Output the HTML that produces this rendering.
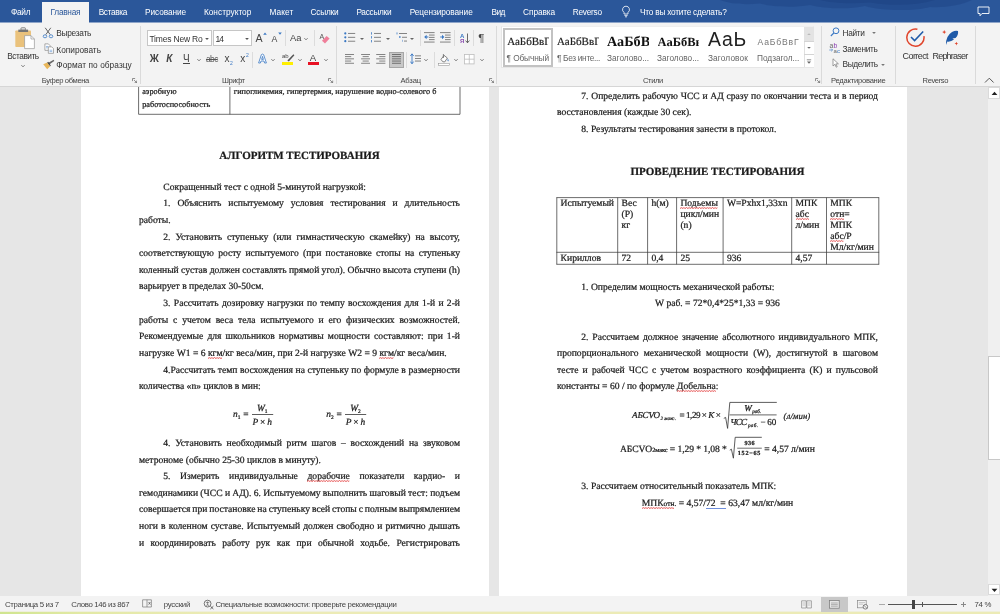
<!DOCTYPE html>
<html lang="ru"><head><meta charset="utf-8"><title>Word</title>
<style>
html,body{margin:0;padding:0}
body{width:1000px;height:614px;position:relative;overflow:hidden;background:#e6e6e6;font-family:"Liberation Sans",sans-serif;}
.dl{-webkit-text-stroke:0.22px #1a1a1a;text-rendering:geometricPrecision;position:absolute;white-space:nowrap;font-family:"Liberation Serif",serif;color:#1a1a1a;line-height:14px;height:14px}
.ui{position:absolute;white-space:nowrap;font-family:"Liberation Sans",sans-serif;font-size:8.3px;color:#333;line-height:10px;height:10px}
u.sq{text-decoration:none;position:relative;display:inline-block}
.sqs{position:absolute;left:0;top:10.1px;width:100%;height:2px}
u.bl{text-decoration:none;background:linear-gradient(#6f8fdc,#6f8fdc) 0 9.6px/100% 1.4px no-repeat}
.page{position:absolute;background:#fff;top:87px;height:509px}
</style></head><body>
<svg width="0" height="0" style="position:absolute"><defs><pattern id="wv" width="2.6" height="2" patternUnits="userSpaceOnUse"><path d="M0 1.6 L1.3 0.5 L2.6 1.6" fill="none" stroke="#e02a2a" stroke-width="0.75"/></pattern></defs></svg>

<div style="position:absolute;left:0;top:0;width:1000px;height:614px;will-change:transform">
<div class="page" style="left:81px;width:408px"></div>
<div class="page" style="left:499px;width:408px"></div>
<svg style="position:absolute;left:0;top:87px" width="1000" height="40"><g fill="none" stroke="#3c3c3c" stroke-width="0.75"><path d="M138.6 0 V27.3 H460 V0 M229.9 0 V27.3"/></g></svg>
<div class="dl" style="top:85px;left:142.20px;font-size:8.25px;">аэробную</div>
<div class="dl" style="top:98px;left:142.20px;font-size:8.25px;">работоспособность</div>
<div class="dl" style="top:85px;left:233.80px;font-size:8.25px;">гипогликемия, гипертермия, нарушение водно-солевого б</div>
<div class="dl" style="top:149px;left:139.00px;font-size:11px;width:321.00px;text-align:center;font-weight:bold;">АЛГОРИТМ ТЕСТИРОВАНИЯ</div>
<div class="dl" style="top:181px;left:163.30px;font-size:9.6px;">Сокращенный тест с одной 5-минутой нагрузкой:</div>
<div class="dl" style="top:197px;left:163.30px;font-size:9.6px;width:296.70px;word-spacing:4.512px;">1. Объяснить испытуемому условия тестирования и длительность</div>
<div class="dl" style="top:214px;left:139.00px;font-size:9.6px;">работы.</div>
<div class="dl" style="top:231px;left:163.30px;font-size:9.6px;width:296.70px;word-spacing:2.526px;">2. Установить ступеньку (или гимнастическую скамейку) на высоту,</div>
<div class="dl" style="top:247px;left:139.00px;font-size:9.6px;width:321.00px;word-spacing:1.879px;">соответствующую росту испытуемого (при постановке стопы на ступеньку</div>
<div class="dl" style="top:264px;left:139.00px;font-size:9.6px;width:321.00px;word-spacing:-0.054px;">коленный сустав должен составлять прямой угол). Обычно высота ступени (h)</div>
<div class="dl" style="top:280px;left:139.00px;font-size:9.6px;">варьирует в пределах 30-50см.</div>
<div class="dl" style="top:297px;left:163.30px;font-size:9.6px;width:296.70px;word-spacing:0.940px;">3. Рассчитать дозировку нагрузки по темпу восхождения для 1-й и 2-й</div>
<div class="dl" style="top:314px;left:139.00px;font-size:9.6px;width:321.00px;word-spacing:2.436px;">работы с учетом веса тела испытуемого и его физических возможностей.</div>
<div class="dl" style="top:330px;left:139.00px;font-size:9.6px;width:321.00px;word-spacing:1.705px;">Рекомендуемые для школьников нормативы мощности составляют: при 1-й</div>
<div class="dl" style="top:347px;left:139.00px;font-size:9.6px;">нагрузке W1 = 6 <u class="sq">кгм<svg class="sqs" preserveAspectRatio="none"><rect width="100%" height="2" fill="url(#wv)"/></svg></u>/кг веса/мин, при 2-й нагрузке W2 = 9 <u class="sq">кгм<svg class="sqs" preserveAspectRatio="none"><rect width="100%" height="2" fill="url(#wv)"/></svg></u>/кг веса/мин.</div>
<div class="dl" style="top:364px;left:163.30px;font-size:9.6px;width:296.70px;word-spacing:0.109px;">4.Рассчитать темп восхождения на ступеньку по формуле в размерности</div>
<div class="dl" style="top:380px;left:139.00px;font-size:9.6px;">количества «n» циклов в мин:</div>
<div class="dl" style="top:437px;left:163.30px;font-size:9.6px;width:296.70px;word-spacing:2.326px;">4. Установить необходимый ритм шагов – восхождений на звуковом</div>
<div class="dl" style="top:454px;left:139.00px;font-size:9.6px;">метрономе (обычно 25-30 циклов в минуту).</div>
<div class="dl" style="top:470px;left:163.30px;font-size:9.6px;width:296.70px;word-spacing:7.169px;">5. Измерить индивидуальные <u class="sq">дорабочие<svg class="sqs" preserveAspectRatio="none"><rect width="100%" height="2" fill="url(#wv)"/></svg></u> показатели кардио- и</div>
<div class="dl" style="top:487px;left:139.00px;font-size:9.6px;width:321.00px;word-spacing:-0.097px;">гемодинамики (ЧСС и АД). 6. Испытуемому выполнить шаговый тест: подъем</div>
<div class="dl" style="top:503px;left:139.00px;font-size:9.6px;width:321.00px;word-spacing:-0.498px;">совершается при постановке на ступеньку всей стопы с полным выпрямлением</div>
<div class="dl" style="top:520px;left:139.00px;font-size:9.6px;width:321.00px;word-spacing:0.696px;">ноги в коленном суставе. Испытуемый должен свободно и ритмично дышать</div>
<div class="dl" style="top:537px;left:139.00px;font-size:9.6px;width:321.00px;word-spacing:4.004px;">и координировать работу рук как при обычной ходьбе. Регистрировать</div>
<div class="dl" style="top:408px;left:233.00px;font-size:9.4px;font-style:italic;">n<span style="font-size:5.4px;font-style:normal;position:relative;top:1.6px">1</span></div>
<div class="dl" style="top:408px;left:243.30px;font-size:9.4px;">=</div>
<svg style="position:absolute;left:251.6px;top:413px" width="22" height="3"><path d="M0 1.5 H21.2" stroke="#333" stroke-width="0.8"/></svg>
<div class="dl" style="top:402px;left:251.60px;font-size:9.4px;width:21.20px;text-align:center;font-style:italic;">W<span style="font-size:5.4px;font-style:normal;position:relative;top:1.6px">1</span></div>
<div class="dl" style="top:416px;left:251.60px;font-size:9.4px;width:21.20px;text-align:center;font-style:italic;">P<span style="font-style:normal">&thinsp;×&thinsp;</span>h</div>
<div class="dl" style="top:408px;left:326.20px;font-size:9.4px;font-style:italic;">n<span style="font-size:5.4px;font-style:normal;position:relative;top:1.6px">2</span></div>
<div class="dl" style="top:408px;left:336.50px;font-size:9.4px;">=</div>
<svg style="position:absolute;left:344.8px;top:413px" width="22" height="3"><path d="M0 1.5 H21.2" stroke="#333" stroke-width="0.8"/></svg>
<div class="dl" style="top:402px;left:344.80px;font-size:9.4px;width:21.20px;text-align:center;font-style:italic;">W<span style="font-size:5.4px;font-style:normal;position:relative;top:1.6px">2</span></div>
<div class="dl" style="top:416px;left:344.80px;font-size:9.4px;width:21.20px;text-align:center;font-style:italic;">P<span style="font-style:normal">&thinsp;×&thinsp;</span>h</div>
<div class="dl" style="top:90px;left:581.30px;font-size:9.6px;width:296.70px;word-spacing:0.355px;">7. Определить рабочую ЧСС и АД сразу по окончании теста и в период</div>
<div class="dl" style="top:106px;left:557.00px;font-size:9.6px;">восстановления (каждые 30 сек).</div>
<div class="dl" style="top:123px;left:581.30px;font-size:9.6px;">8. Результаты тестирования занести в протокол.</div>
<div class="dl" style="top:165px;left:557.00px;font-size:11px;width:321.00px;text-align:center;font-weight:bold;">ПРОВЕДЕНИЕ ТЕСТИРОВАНИЯ</div>
<svg style="position:absolute;left:0;top:0" width="1000" height="300"><g fill="none" stroke="#3c3c3c" stroke-width="0.75"><path d="M556.40 197.60 H879.20"/><path d="M556.40 252.30 H879.20"/><path d="M556.40 264.30 H879.20"/><path d="M556.80 197.60 V264.30"/><path d="M617.70 197.60 V264.30"/><path d="M647.60 197.60 V264.30"/><path d="M676.60 197.60 V264.30"/><path d="M723.10 197.60 V264.30"/><path d="M791.70 197.60 V264.30"/><path d="M826.50 197.60 V264.30"/><path d="M878.80 197.60 V264.30"/></g></svg>
<div class="dl" style="top:197px;left:560.60px;font-size:9.6px;">Испытуемый</div>
<div class="dl" style="top:197px;left:621.50px;font-size:9.6px;">Вес</div>
<div class="dl" style="top:208px;left:621.50px;font-size:9.6px;">(P)</div>
<div class="dl" style="top:219px;left:621.50px;font-size:9.6px;">кг</div>
<div class="dl" style="top:197px;left:651.40px;font-size:9.6px;">h(м)</div>
<div class="dl" style="top:197px;left:680.40px;font-size:9.6px;"><u class="sq">Подьемы<svg class="sqs" preserveAspectRatio="none"><rect width="100%" height="2" fill="url(#wv)"/></svg></u></div>
<div class="dl" style="top:208px;left:680.40px;font-size:9.6px;">цикл/мин</div>
<div class="dl" style="top:219px;left:680.40px;font-size:9.6px;">(n)</div>
<div class="dl" style="top:197px;left:726.90px;font-size:9.6px;">W=Pxhx1,33xn</div>
<div class="dl" style="top:197px;left:795.50px;font-size:9.6px;">МПК</div>
<div class="dl" style="top:208px;left:795.50px;font-size:9.6px;"><u class="sq">абс<svg class="sqs" preserveAspectRatio="none"><rect width="100%" height="2" fill="url(#wv)"/></svg></u></div>
<div class="dl" style="top:219px;left:795.50px;font-size:9.6px;">л/мин</div>
<div class="dl" style="top:197px;left:830.30px;font-size:9.6px;">МПК</div>
<div class="dl" style="top:208px;left:830.30px;font-size:9.6px;"><u class="sq">отн<svg class="sqs" preserveAspectRatio="none"><rect width="100%" height="2" fill="url(#wv)"/></svg></u>=</div>
<div class="dl" style="top:219px;left:830.30px;font-size:9.6px;">МПК</div>
<div class="dl" style="top:230px;left:830.30px;font-size:9.6px;"><u class="sq">абс<svg class="sqs" preserveAspectRatio="none"><rect width="100%" height="2" fill="url(#wv)"/></svg></u>/P</div>
<div class="dl" style="top:241px;left:830.30px;font-size:9.6px;">Мл/кг/мин</div>
<div class="dl" style="top:252px;left:560.60px;font-size:9.6px;">Кириллов</div>
<div class="dl" style="top:252px;left:621.50px;font-size:9.6px;">72</div>
<div class="dl" style="top:252px;left:651.40px;font-size:9.6px;">0,4</div>
<div class="dl" style="top:252px;left:680.40px;font-size:9.6px;">25</div>
<div class="dl" style="top:252px;left:726.90px;font-size:9.6px;">936</div>
<div class="dl" style="top:252px;left:795.50px;font-size:9.6px;">4,57</div>
<div class="dl" style="top:281px;left:581.30px;font-size:9.6px;">1. Определим мощность механической работы:</div>
<div class="dl" style="top:297px;left:557.00px;font-size:9.6px;width:321.00px;text-align:center;">W раб. = 72*0,4*25*1,33 = 936</div>
<div class="dl" style="top:331px;left:581.30px;font-size:9.6px;width:296.70px;word-spacing:1.408px;">2. Рассчитаем должное значение абсолютного индивидуального МПК,</div>
<div class="dl" style="top:347px;left:557.00px;font-size:9.6px;width:321.00px;word-spacing:2.815px;">пропорционального механической мощности (W), достигнутой в шаговом</div>
<div class="dl" style="top:364px;left:557.00px;font-size:9.6px;width:321.00px;word-spacing:1.794px;">тесте и рабочей ЧСС с учетом возрастного коэффициента (К) и пульсовой</div>
<div class="dl" style="top:380px;left:557.00px;font-size:9.6px;">константы = 60 / по формуле <u class="sq">Добельна<svg class="sqs" preserveAspectRatio="none"><rect width="100%" height="2" fill="url(#wv)"/></svg></u>:</div>
<div class="dl" style="top:408px;left:632.00px;font-size:9.1px;font-style:italic;letter-spacing:-0.169px;">АБСVO</div>
<div class="dl" style="top:413px;left:660.40px;font-size:5px;font-style:italic;letter-spacing:0.077px;">2 макс.</div>
<div class="dl" style="top:408px;left:679.60px;font-size:9.1px;letter-spacing:-0.481px;">= 1,29 × <i>K</i> ×</div>
<svg style="position:absolute;left:722px;top:398px" width="58" height="34" viewBox="0 0 58 34"><path d="M1.8 20.4 L3.6 19.4 L5.6 30.4 L7.8 4.4 L54.8 4.4" fill="none" stroke="#333" stroke-width="0.8"/><path d="M7.6 16.9 H54.6" stroke="#333" stroke-width="0.75"/></svg>
<div class="dl" style="top:401px;left:744.20px;font-size:9.1px;font-style:italic;letter-spacing:0.822px;">W</div>
<div class="dl" style="top:405px;left:752.20px;font-size:5.2px;font-style:italic;letter-spacing:-0.023px;">раб.</div>
<div class="dl" style="top:415px;left:730.20px;font-size:9.1px;font-style:italic;letter-spacing:-0.735px;">ЧСС</div>
<div class="dl" style="top:419px;left:748.00px;font-size:5.2px;font-style:italic;letter-spacing:0.277px;">раб.</div>
<div class="dl" style="top:415px;left:760.60px;font-size:9.1px;letter-spacing:-0.112px;">−&thinsp;60</div>
<div class="dl" style="top:409px;left:783.60px;font-size:8.8px;font-style:italic;letter-spacing:0.012px;">(л/мин)</div>
<div class="dl" style="top:443px;left:620.00px;font-size:9.6px;letter-spacing:-0.094px;">АБСVO<span style="font-size:6.4px">2макс</span> = 1,29 * 1,08 *</div>
<svg style="position:absolute;left:728px;top:433px" width="36" height="28" viewBox="0 0 36 28"><path d="M1.8 17.2 L3.4 16.2 L5.4 25.2 L7.2 4.3 L33.8 4.3" fill="none" stroke="#333" stroke-width="0.8"/><path d="M9.2 15.2 H33.8" stroke="#333" stroke-width="0.7"/></svg>
<div class="dl" style="top:437px;left:744.60px;font-size:6.2px;font-weight:bold;letter-spacing:0.306px;">936</div>
<div class="dl" style="top:447px;left:737.80px;font-size:6.2px;font-weight:bold;letter-spacing:0.733px;">152−65</div>
<div class="dl" style="top:443px;left:764.20px;font-size:9.6px;letter-spacing:-0.016px;">= 4,57 л/мин</div>
<div class="dl" style="top:480px;left:581.30px;font-size:9.6px;">3. Рассчитаем относительный показатель МПК:</div>
<div class="dl" style="top:497px;left:557.00px;font-size:9.6px;width:321.00px;text-align:center;"><u class="sq">МПК<span style="font-size:7.4px">отн</span><svg class="sqs" preserveAspectRatio="none"><rect width="100%" height="2" fill="url(#wv)"/></svg></u><span style="font-size:7.4px">.</span> = 4,57/<u class="bl">72&nbsp; =</u> 63,47 мл/кг/мин</div>
<div style="position:absolute;left:0px;top:0px;width:1000px;height:22px;background:#2b579a;"></div>
<div style="position:absolute;left:0px;top:22px;width:1000px;height:1px;background:#8ea5c9;"></div>
<svg style="position:absolute;left:700px;top:0px" width="290" height="14" viewBox="0 0 290 14"><path d="M20 0 C30 4 45 5 60 3.5 C70 7 95 8 110 5 C125 9 150 9.5 165 6 C180 11 215 11.5 230 7 C245 8 262 5 272 0 Z" fill="#1f4686" opacity="0.55"/><path d="M120 0 C130 3 150 4 170 2.5 C190 6 215 6 235 0 Z" fill="#1b3f7c" opacity="0.4"/></svg>
<div style="position:absolute;left:0px;top:23px;width:1000px;height:63px;background:#f3f3f3;"></div>
<div style="position:absolute;left:0px;top:86px;width:1000px;height:1px;background:#d6d6d6;"></div>
<div style="position:absolute;left:42px;top:2px;width:47px;height:21px;background:#f3f3f3;"></div>
<div class="ui" style="top:7px;left:11.00px;color:#fff;letter-spacing:-0.277px;">Файл</div>
<div class="ui" style="top:7px;left:50.60px;color:#2b579a;letter-spacing:-0.285px;">Главная</div>
<div class="ui" style="top:7px;left:98.70px;color:#fff;letter-spacing:-0.363px;">Вставка</div>
<div class="ui" style="top:7px;left:145.00px;color:#fff;letter-spacing:-0.089px;">Рисование</div>
<div class="ui" style="top:7px;left:203.90px;color:#fff;letter-spacing:0.017px;">Конструктор</div>
<div class="ui" style="top:7px;left:269.50px;color:#fff;letter-spacing:0.083px;">Макет</div>
<div class="ui" style="top:7px;left:310.60px;color:#fff;letter-spacing:-0.253px;">Ссылки</div>
<div class="ui" style="top:7px;left:356.40px;color:#fff;letter-spacing:-0.294px;">Рассылки</div>
<div class="ui" style="top:7px;left:409.70px;color:#fff;letter-spacing:-0.077px;">Рецензирование</div>
<div class="ui" style="top:7px;left:491.60px;color:#fff;letter-spacing:-0.639px;">Вид</div>
<div class="ui" style="top:7px;left:523.10px;color:#fff;letter-spacing:-0.095px;">Справка</div>
<div class="ui" style="top:7px;left:572.70px;color:#fff;letter-spacing:-0.258px;">Reverso</div>
<div class="ui" style="top:7px;left:640.00px;color:#fff;letter-spacing:-0.233px;">Что вы хотите сделать?</div>
<svg style="position:absolute;left:621px;top:5px" width="10" height="13" viewBox="0 0 10 13"><path d="M5 1.2 a3.4 3.4 0 0 1 2 6.2 V9 H3 V7.4 A3.4 3.4 0 0 1 5 1.2 Z M3.4 10.4 H6.6 M4 11.8 H6" fill="none" stroke="#fff" stroke-width="0.8"/></svg>
<svg style="position:absolute;left:977px;top:6px" width="13" height="11" viewBox="0 0 13 11"><path d="M1 1 H12 V7.5 H5 L3 9.8 V7.5 H1 Z" fill="none" stroke="#fff" stroke-width="0.9"/></svg>
<div style="position:absolute;left:140px;top:26px;width:1px;height:58px;background:#dadada;"></div>
<div style="position:absolute;left:336px;top:26px;width:1px;height:58px;background:#dadada;"></div>
<div style="position:absolute;left:496px;top:26px;width:1px;height:58px;background:#dadada;"></div>
<div style="position:absolute;left:821px;top:26px;width:1px;height:58px;background:#dadada;"></div>
<div style="position:absolute;left:895px;top:26px;width:1px;height:58px;background:#dadada;"></div>
<div style="position:absolute;left:975px;top:26px;width:1px;height:58px;background:#dadada;"></div>
<div class="ui" style="top:76px;left:41.70px;font-size:7.6px;color:#444;letter-spacing:-0.359px;">Буфер обмена</div>
<div class="ui" style="top:76px;left:222.00px;font-size:7.6px;color:#444;letter-spacing:-0.477px;">Шрифт</div>
<div class="ui" style="top:76px;left:400.40px;font-size:7.6px;color:#444;letter-spacing:-0.142px;">Абзац</div>
<div class="ui" style="top:76px;left:643.00px;font-size:7.6px;color:#444;letter-spacing:-0.378px;">Стили</div>
<div class="ui" style="top:76px;left:831.00px;font-size:7.6px;color:#444;letter-spacing:-0.233px;">Редактирование</div>
<div class="ui" style="top:76px;left:922.60px;font-size:7.6px;color:#444;letter-spacing:-0.412px;">Reverso</div>
<svg style="position:absolute;left:132.2px;top:78px" width="5.2" height="5.2" viewBox="0 0 5 5"><path d="M0.5 3 V0.5 H3 M2 2 L4.5 4.5 M4.5 2.5 V4.5 H2.5" fill="none" stroke="#666" stroke-width="0.7"/></svg>
<svg style="position:absolute;left:328.4px;top:78px" width="5.2" height="5.2" viewBox="0 0 5 5"><path d="M0.5 3 V0.5 H3 M2 2 L4.5 4.5 M4.5 2.5 V4.5 H2.5" fill="none" stroke="#666" stroke-width="0.7"/></svg>
<svg style="position:absolute;left:488.6px;top:78px" width="5.2" height="5.2" viewBox="0 0 5 5"><path d="M0.5 3 V0.5 H3 M2 2 L4.5 4.5 M4.5 2.5 V4.5 H2.5" fill="none" stroke="#666" stroke-width="0.7"/></svg>
<svg style="position:absolute;left:815.4px;top:78px" width="5.2" height="5.2" viewBox="0 0 5 5"><path d="M0.5 3 V0.5 H3 M2 2 L4.5 4.5 M4.5 2.5 V4.5 H2.5" fill="none" stroke="#666" stroke-width="0.7"/></svg>
<svg style="position:absolute;left:984px;top:77px" width="11" height="7" viewBox="0 0 11 7"><path d="M1 5.5 L5.3 1.2 L9.6 5.5" fill="none" stroke="#444" stroke-width="0.9"/></svg>
<svg style="position:absolute;left:14px;top:27px" width="22" height="23" viewBox="0 0 22 23"><rect x="1.3" y="3.4" width="15.7" height="16.6" rx="0.8" fill="#eac27c"/>
<rect x="4.3" y="2.6" width="9.8" height="2.4" fill="#777"/><rect x="7" y="0.8" width="4.4" height="2.4" rx="0.6" fill="none" stroke="#777" stroke-width="0.9"/>
<path d="M10.6 8.6 H17 L20.4 12 V21.6 H10.6 Z" fill="#fff" stroke="#9a9a9a" stroke-width="0.7"/><path d="M17 8.6 V12 H20.4" fill="none" stroke="#9a9a9a" stroke-width="0.7"/></svg>
<div class="ui" style="top:51px;left:7.30px;letter-spacing:-0.471px;">Вставить</div>
<svg style="position:absolute;left:20px;top:64.2px" width="6" height="4" viewBox="0 0 6 4"><path d="M1.4 1.2 L3 2.8 L4.6 1.2" fill="none" stroke="#555" stroke-width="0.8"/></svg>
<svg style="position:absolute;left:42px;top:27px" width="12" height="12" viewBox="0 0 12 12"><path d="M3.2 0.8 L8.2 7.6 M8.8 0.8 L3.8 7.6" stroke="#555" stroke-width="0.9" fill="none"/>
<ellipse cx="3" cy="9.3" rx="1.8" ry="1.5" fill="none" stroke="#3a78c4" stroke-width="0.8"/><ellipse cx="9" cy="9.3" rx="1.8" ry="1.5" fill="none" stroke="#3a78c4" stroke-width="0.8"/></svg>
<div class="ui" style="top:28px;left:56.30px;letter-spacing:-0.276px;">Вырезать</div>
<svg style="position:absolute;left:43.8px;top:43.2px" width="10.4" height="11.2" viewBox="0 0 12 13"><path d="M1 1 H5 L7 3 V8.5 H1 Z" fill="#fff" stroke="#777" stroke-width="0.7"/><path d="M5 4.5 H9 L11 6.5 V12 H5 Z" fill="#fff" stroke="#777" stroke-width="0.7"/>
<path d="M2.3 4 H5 M2.3 5.6 H4.4 M6.4 8.4 H9.6 M6.4 10 H9.6" stroke="#5a8fd0" stroke-width="0.7"/></svg>
<div class="ui" style="top:45px;left:56.30px;letter-spacing:0.001px;">Копировать</div>
<svg style="position:absolute;left:42px;top:59px" width="13" height="11" viewBox="0 0 13 11"><path d="M1.2 5.2 L5.2 3.4 L8.2 7.2 L5.2 10.2 Z" fill="#e8b65a"/><path d="M6 4 L11.6 0.8 L12.3 2 L7.2 5.6 Z" fill="#666"/><path d="M5.2 3.4 L6.2 2.8 L8.8 6.4 L8.2 7.2 Z" fill="#444"/></svg>
<div class="ui" style="top:60px;left:56.30px;letter-spacing:0.064px;">Формат по образцу</div>
<div style="position:absolute;left:147px;top:30px;width:65px;height:16px;background:#fff;border:1px solid #c6c6c6;box-sizing:border-box"></div>
<div style="position:absolute;left:213px;top:30px;width:39px;height:16px;background:#fff;border:1px solid #c6c6c6;box-sizing:border-box"></div>
<div style="position:absolute;left:149.4px;top:32px;width:54px;height:12px;overflow:hidden"></div>
<div class="ui" style="top:34px;left:149.40px;font-size:8.5px;color:#333;letter-spacing:-0.188px;width:53.4px;overflow:hidden;">Times New Ror</div>
<div class="ui" style="top:34px;left:215.40px;font-size:8.5px;color:#333;letter-spacing:-0.934px;">14</div>
<svg style="position:absolute;left:204.3px;top:36.8px" width="6" height="4" viewBox="0 0 6 4"><path d="M1.1 1 L4.9 1 L3 2.9 Z" fill="#555"/></svg>
<svg style="position:absolute;left:244.3px;top:36.8px" width="6" height="4" viewBox="0 0 6 4"><path d="M1.1 1 L4.9 1 L3 2.9 Z" fill="#555"/></svg>
<div class="ui" style="top:33px;left:255.60px;font-size:10.6px;color:#444;">A</div>
<svg style="position:absolute;left:262.8px;top:32.2px" width="4" height="3" viewBox="0 0 4 3"><path d="M0.2 2.8 L2 0.4 L3.8 2.8 Z" fill="#3a78c4"/></svg>
<div class="ui" style="top:34px;left:271.60px;font-size:8.8px;color:#444;">A</div>
<svg style="position:absolute;left:277.8px;top:32.2px" width="4" height="3" viewBox="0 0 4 3"><path d="M0.2 0.4 L3.8 0.4 L2 2.8 Z" fill="#3a78c4"/></svg>
<div style="position:absolute;left:285px;top:30px;width:1px;height:16px;background:#dcdcdc;"></div>
<div class="ui" style="top:33px;left:290.00px;font-size:9.4px;color:#444;letter-spacing:-0.034px;">Aa</div>
<svg style="position:absolute;left:302.8px;top:36.6px" width="6" height="4" viewBox="0 0 6 4"><path d="M1.4 1.2 L3 2.8 L4.6 1.2" fill="none" stroke="#555" stroke-width="0.8"/></svg>
<div style="position:absolute;left:314px;top:30px;width:1px;height:16px;background:#dcdcdc;"></div>
<div class="ui" style="top:32px;left:319.60px;font-size:7px;color:#555;">A</div>
<svg style="position:absolute;left:321px;top:35px" width="10" height="9" viewBox="0 0 10 9"><path d="M1 5.8 L5.6 1 L8.6 3.6 L4 8.4 Z" fill="#ef7f9a"/></svg>
<div class="ui" style="top:54px;left:149.80px;font-size:10px;color:#444;font-weight:bold;letter-spacing:0.553px;">Ж</div>
<div class="ui" style="top:54px;left:166.20px;font-size:10px;color:#444;font-weight:bold;font-style:italic;">К</div>
<div class="ui" style="top:54px;left:183.00px;font-size:10px;color:#444;">Ч</div>
<div style="position:absolute;left:183px;top:63px;width:7px;height:1px;background:#444;"></div>
<svg style="position:absolute;left:195.5px;top:58px" width="6" height="4" viewBox="0 0 6 4"><path d="M1.4 1.2 L3 2.8 L4.6 1.2" fill="none" stroke="#555" stroke-width="0.8"/></svg>
<div class="ui" style="top:54px;left:206.00px;font-size:8.4px;color:#555;letter-spacing:-0.572px;text-decoration:line-through;">abc</div>
<div class="ui" style="top:54px;left:224.40px;font-size:10px;color:#444;">x</div>
<div class="ui" style="top:58px;left:230.00px;font-size:5px;color:#3a78c4;">2</div>
<div class="ui" style="top:54px;left:240.20px;font-size:10px;color:#444;">x</div>
<div class="ui" style="top:50px;left:246.00px;font-size:5px;color:#3a78c4;">2</div>
<div style="position:absolute;left:252px;top:52px;width:1px;height:16px;background:#dcdcdc;"></div>
<svg style="position:absolute;left:257px;top:53px" width="11" height="11" viewBox="0 0 11 11"><path d="M1.6 10 L4.4 1.6 Q5.5 0.6 6.6 1.6 L9.4 10 H7.6 L7 8 H4 L3.4 10 Z M4.6 6.4 H6.4 L5.5 3.4 Z" fill="#fff" stroke="#3a78c4" stroke-width="0.8"/></svg>
<svg style="position:absolute;left:270px;top:58px" width="6" height="4" viewBox="0 0 6 4"><path d="M1.4 1.2 L3 2.8 L4.6 1.2" fill="none" stroke="#555" stroke-width="0.8"/></svg>
<div class="ui" style="top:51px;left:282.00px;font-size:6px;color:#444;">ab</div>
<svg style="position:absolute;left:286px;top:53px" width="9" height="9" viewBox="0 0 9 9"><path d="M1.4 7.6 L7.4 1.2 L8.4 2.2 L2.8 8.4 Z" fill="#555"/></svg>
<div style="position:absolute;left:282px;top:62px;width:11px;height:3px;background:#ffef00;"></div>
<svg style="position:absolute;left:297px;top:58px" width="6" height="4" viewBox="0 0 6 4"><path d="M1.4 1.2 L3 2.8 L4.6 1.2" fill="none" stroke="#555" stroke-width="0.8"/></svg>
<div class="ui" style="top:53px;left:309.80px;font-size:9.6px;color:#444;letter-spacing:0.794px;">A</div>
<div style="position:absolute;left:308px;top:62px;width:11px;height:3px;background:#e81123;"></div>
<svg style="position:absolute;left:322.6px;top:58px" width="6" height="4" viewBox="0 0 6 4"><path d="M1.4 1.2 L3 2.8 L4.6 1.2" fill="none" stroke="#555" stroke-width="0.8"/></svg>
<svg style="position:absolute;left:343.6px;top:32.4px" width="12" height="11" viewBox="0 0 12 11"><circle cx="1.3" cy="1.4" r="1.1" fill="#3a78c4"/><rect x="4" y="0.95" width="7.2" height="0.9" fill="#777"/><circle cx="1.3" cy="5.3" r="1.1" fill="#3a78c4"/><rect x="4" y="4.85" width="7.2" height="0.9" fill="#777"/><circle cx="1.3" cy="9.2" r="1.1" fill="#3a78c4"/><rect x="4" y="8.75" width="7.2" height="0.9" fill="#777"/></svg>
<svg style="position:absolute;left:359.2px;top:36.8px" width="6" height="4" viewBox="0 0 6 4"><path d="M1 1 L5 1 L3 3 Z" fill="#666"/></svg>
<svg style="position:absolute;left:369.6px;top:32.4px" width="12" height="11" viewBox="0 0 12 11"><rect x="1" y="0.19999999999999996" width="0.8" height="2.4" fill="#3a78c4"/><rect x="4" y="0.95" width="7" height="0.9" fill="#777"/><rect x="1" y="4.1" width="0.8" height="2.4" fill="#3a78c4"/><rect x="4" y="4.85" width="7" height="0.9" fill="#777"/><rect x="1" y="7.999999999999999" width="0.8" height="2.4" fill="#3a78c4"/><rect x="4" y="8.75" width="7" height="0.9" fill="#777"/></svg>
<svg style="position:absolute;left:385px;top:36.8px" width="6" height="4" viewBox="0 0 6 4"><path d="M1 1 L5 1 L3 3 Z" fill="#666"/></svg>
<svg style="position:absolute;left:395.6px;top:32.4px" width="12" height="11" viewBox="0 0 12 11"><rect x="0.6" y="0.4" width="0.8" height="2" fill="#3a78c4"/><rect x="3" y="1" width="8" height="0.9" fill="#777"/><rect x="3" y="4" width="1.6" height="2" fill="#3a78c4" opacity="0.7"/><rect x="6" y="4.8" width="5" height="0.9" fill="#777"/><rect x="6" y="7.8" width="0.8" height="2" fill="#3a78c4" opacity="0.6"/><rect x="8" y="8.6" width="3" height="0.9" fill="#777"/></svg>
<svg style="position:absolute;left:409px;top:36.8px" width="6" height="4" viewBox="0 0 6 4"><path d="M1 1 L5 1 L3 3 Z" fill="#666"/></svg>
<div style="position:absolute;left:420px;top:30px;width:1px;height:16px;background:#dcdcdc;"></div>
<svg style="position:absolute;left:424.2px;top:32.4px" width="11" height="11" viewBox="0 0 11 11"><rect x="0" y="0.2" width="10.6" height="0.9" fill="#777"/><rect x="0" y="9.6" width="10.6" height="0.9" fill="#777"/><rect x="5" y="2.6" width="5.6" height="0.9" fill="#777"/><rect x="5" y="4.9" width="5.6" height="0.9" fill="#777"/><rect x="5" y="7.199999999999999" width="5.6" height="0.9" fill="#777"/><path d="M0.2 5 L2.6 2.8 V4.4 H4.4 V5.6 H2.6 V7.2 Z" fill="#3a78c4"/></svg>
<svg style="position:absolute;left:439.8px;top:32.4px" width="11" height="11" viewBox="0 0 11 11"><rect x="0" y="0.2" width="10.6" height="0.9" fill="#777"/><rect x="0" y="9.6" width="10.6" height="0.9" fill="#777"/><rect x="5" y="2.6" width="5.6" height="0.9" fill="#777"/><rect x="5" y="4.9" width="5.6" height="0.9" fill="#777"/><rect x="5" y="7.199999999999999" width="5.6" height="0.9" fill="#777"/><path d="M4.4 5 L2 2.8 V4.4 H0.2 V5.6 H2 V7.2 Z" fill="#3a78c4"/></svg>
<div style="position:absolute;left:454px;top:30px;width:1px;height:16px;background:#dcdcdc;"></div>
<div class="ui" style="top:31px;left:460.00px;font-size:6px;color:#3a78c4;font-weight:bold;">А</div>
<div class="ui" style="top:36px;left:460.00px;font-size:6px;color:#8a4fb0;font-weight:bold;">Я</div>
<svg style="position:absolute;left:465px;top:32.5px" width="5" height="11" viewBox="0 0 5 11"><path d="M2.5 0.5 V9.6 M0.6 7.6 L2.5 9.8 L4.4 7.6" fill="none" stroke="#444" stroke-width="0.8"/></svg>
<div style="position:absolute;left:473px;top:30px;width:1px;height:16px;background:#dcdcdc;"></div>
<div class="ui" style="top:33px;left:478.20px;font-size:11.5px;color:#444;">¶</div>
<svg style="position:absolute;left:345px;top:54.2px" width="9.4" height="12.0" viewBox="0 0 9.4 12.0"><rect x="0.00" y="0.00" width="9.2" height="0.9" fill="#777"/><rect x="0.00" y="2.20" width="6.2" height="0.9" fill="#777"/><rect x="0.00" y="4.40" width="9.2" height="0.9" fill="#777"/><rect x="0.00" y="6.60" width="6.2" height="0.9" fill="#777"/><rect x="0.00" y="8.80" width="9.2" height="0.9" fill="#777"/></svg>
<svg style="position:absolute;left:360.5px;top:54.2px" width="9.4" height="12.0" viewBox="0 0 9.4 12.0"><rect x="0.10" y="0.00" width="9.2" height="0.9" fill="#777"/><rect x="1.60" y="2.20" width="6.2" height="0.9" fill="#777"/><rect x="0.10" y="4.40" width="9.2" height="0.9" fill="#777"/><rect x="1.60" y="6.60" width="6.2" height="0.9" fill="#777"/><rect x="0.10" y="8.80" width="9.2" height="0.9" fill="#777"/></svg>
<svg style="position:absolute;left:376.2px;top:54.2px" width="9.4" height="12.0" viewBox="0 0 9.4 12.0"><rect x="0.20" y="0.00" width="9.2" height="0.9" fill="#777"/><rect x="3.20" y="2.20" width="6.2" height="0.9" fill="#777"/><rect x="0.20" y="4.40" width="9.2" height="0.9" fill="#777"/><rect x="3.20" y="6.60" width="6.2" height="0.9" fill="#777"/><rect x="0.20" y="8.80" width="9.2" height="0.9" fill="#777"/></svg>
<div style="position:absolute;left:389px;top:52px;width:15px;height:16px;background:#c8c8c8;border:1px solid #a6a6a6;box-sizing:border-box"></div>
<svg style="position:absolute;left:392px;top:54.2px" width="9.4" height="12.0" viewBox="0 0 9.4 12.0"><rect x="0.00" y="0.00" width="9.2" height="0.9" fill="#666"/><rect x="0.00" y="2.20" width="9.2" height="0.9" fill="#666"/><rect x="0.00" y="4.40" width="9.2" height="0.9" fill="#666"/><rect x="0.00" y="6.60" width="9.2" height="0.9" fill="#666"/><rect x="0.00" y="8.80" width="9.2" height="0.9" fill="#666"/></svg>
<div style="position:absolute;left:406px;top:52px;width:1px;height:16px;background:#dcdcdc;"></div>
<svg style="position:absolute;left:410px;top:53px" width="12" height="12" viewBox="0 0 12 12"><path d="M2 1 V10.6 M0.4 3 L2 0.8 L3.6 3 M0.4 8.6 L2 10.8 L3.6 8.6" fill="none" stroke="#3a78c4" stroke-width="0.9"/><rect x="5" y="2.4" width="6" height="0.9" fill="#777"/><rect x="5" y="5" width="6" height="0.9" fill="#777"/><rect x="5" y="7.6" width="6" height="0.9" fill="#777"/></svg>
<svg style="position:absolute;left:423.4px;top:58px" width="6" height="4" viewBox="0 0 6 4"><path d="M1.4 1.2 L3 2.8 L4.6 1.2" fill="none" stroke="#555" stroke-width="0.8"/></svg>
<div style="position:absolute;left:434px;top:52px;width:1px;height:16px;background:#dcdcdc;"></div>
<svg style="position:absolute;left:438px;top:52.5px" width="13" height="13" viewBox="0 0 13 13"><path d="M3 6.4 L6 2.4 L9.4 5 L6.6 9 Q4.6 9.6 3 6.4 Z" fill="#fff" stroke="#666" stroke-width="0.8"/><path d="M5.4 1 V5" stroke="#666" stroke-width="0.8"/><path d="M9.8 5.4 Q11.4 7.4 10.2 8.6 Q9 7.6 9.8 5.4 Z" fill="#3a78c4"/><rect x="0.6" y="10.4" width="10.8" height="2" fill="#fff" stroke="#888" stroke-width="0.5"/></svg>
<svg style="position:absolute;left:453.3px;top:58px" width="6" height="4" viewBox="0 0 6 4"><path d="M1.4 1.2 L3 2.8 L4.6 1.2" fill="none" stroke="#555" stroke-width="0.8"/></svg>
<svg style="position:absolute;left:464.4px;top:53.8px" width="11" height="11" viewBox="0 0 11 11"><rect x="0.5" y="0.5" width="9.6" height="9.4" fill="#fff" stroke="#bdbdbd" stroke-width="0.8"/><path d="M5.3 0.5 V9.9 M0.5 5.2 H10.1" stroke="#bdbdbd" stroke-width="0.8"/></svg>
<svg style="position:absolute;left:479.2px;top:58px" width="6" height="4" viewBox="0 0 6 4"><path d="M1.4 1.2 L3 2.8 L4.6 1.2" fill="none" stroke="#555" stroke-width="0.8"/></svg>
<div style="position:absolute;left:501px;top:26px;width:313px;height:42px;background:#fff;border:1px solid #e6e6e6;border-top-color:#efefef;box-sizing:border-box"></div>
<div style="position:absolute;left:804px;top:27px;width:10px;height:40px;background:#fff;border-left:1px solid #e0e0e0;box-sizing:border-box"></div>
<div style="position:absolute;left:804px;top:27px;width:10px;height:14px;background:#e3e3e3;"></div>
<div style="position:absolute;left:804px;top:41px;width:10px;height:1px;background:#d4d4d4;"></div>
<div style="position:absolute;left:804px;top:54px;width:10px;height:1px;background:#d4d4d4;"></div>
<svg style="position:absolute;left:806px;top:32px" width="6" height="4" viewBox="0 0 6 4"><path d="M1.2 3 L3 1.2 L4.8 3 Z" fill="#b8b8b8"/></svg>
<svg style="position:absolute;left:806px;top:46px" width="6" height="4" viewBox="0 0 6 4"><path d="M1.2 1 L4.8 1 L3 2.8 Z" fill="#666"/></svg>
<svg style="position:absolute;left:806px;top:58.5px" width="6" height="6" viewBox="0 0 6 6"><path d="M0.8 0.8 H5.2" stroke="#666" stroke-width="0.7"/><path d="M1 2.6 L5 2.6 L3 4.8 Z" fill="#666"/></svg>
<div style="position:absolute;left:503px;top:28px;width:50px;height:39px;background:#fff;border:2px solid #c2c2c2;box-sizing:border-box"></div>
<div class="ui" style="top:36px;left:507.20px;font-size:11px;color:#222;line-height:13px;height:13px;width:42px;overflow:hidden;-webkit-text-stroke:0.2px #222;font-family:'Liberation Serif',serif;text-rendering:geometricPrecision;">АаБбВвГ</div>
<div class="ui" style="top:36px;left:557.00px;font-size:11px;color:#222;line-height:13px;height:13px;width:42px;overflow:hidden;-webkit-text-stroke:0.2px #222;font-family:'Liberation Serif',serif;text-rendering:geometricPrecision;">АаБбВвГ</div>
<div class="ui" style="top:34px;left:607.00px;font-size:14.2px;color:#111;font-weight:bold;line-height:16px;height:16px;width:41.8px;overflow:hidden;font-family:'Liberation Serif',serif;text-rendering:geometricPrecision;">АаБбВ</div>
<div class="ui" style="top:35px;left:657.60px;font-size:12.5px;color:#111;font-weight:bold;line-height:14px;height:14px;width:41px;overflow:hidden;font-family:'Liberation Serif',serif;text-rendering:geometricPrecision;">АаБбВв</div>
<div class="ui" style="top:28px;left:708.00px;font-size:19.4px;color:#222;letter-spacing:0.776px;line-height:22px;height:22px;">АаЬ</div>
<div class="ui" style="top:37px;left:757.60px;font-size:8.6px;color:#777;letter-spacing:0.811px;">АаБбВвГ</div>
<div class="ui" style="top:53px;left:506.60px;color:#666;letter-spacing:-0.115px;">¶ Обычный</div>
<div class="ui" style="top:53px;left:557.00px;color:#666;letter-spacing:-0.323px;">¶ Без инте...</div>
<div class="ui" style="top:53px;left:607.00px;color:#666;letter-spacing:-0.027px;">Заголово...</div>
<div class="ui" style="top:53px;left:657.00px;color:#666;letter-spacing:-0.027px;">Заголово...</div>
<div class="ui" style="top:53px;left:708.00px;color:#666;letter-spacing:0.109px;">Заголовок</div>
<div class="ui" style="top:53px;left:757.00px;color:#666;letter-spacing:-0.026px;">Подзагол...</div>
<svg style="position:absolute;left:829.5px;top:26.6px" width="10" height="10" viewBox="0 0 10 10"><circle cx="6" cy="3.8" r="2.9" fill="none" stroke="#3a78c4" stroke-width="1"/><path d="M3.8 6 L0.8 9" stroke="#3a78c4" stroke-width="1.1"/></svg>
<div class="ui" style="top:28px;left:842.60px;letter-spacing:-0.338px;">Найти</div>
<svg style="position:absolute;left:871px;top:31.4px" width="6" height="4" viewBox="0 0 6 4"><path d="M1.1 1 L4.9 1 L3 2.9 Z" fill="#777"/></svg>
<div class="ui" style="top:41px;left:829.60px;font-size:6.8px;color:#666;">a<span style="color:#8a3fb0">b</span></div>
<div class="ui" style="top:46px;left:833.60px;font-size:6px;color:#666;">a<span style="color:#3a78c4">c</span></div>
<svg style="position:absolute;left:829.4px;top:48.4px" width="5" height="4" viewBox="0 0 5 4"><path d="M0.2 2 H3.6 M2.2 0.6 L3.6 2 L2.2 3.4" fill="none" stroke="#3a78c4" stroke-width="0.6"/></svg>
<div class="ui" style="top:44px;left:842.60px;letter-spacing:-0.287px;">Заменить</div>
<svg style="position:absolute;left:831.5px;top:57.6px" width="8" height="10" viewBox="0 0 8 10"><path d="M1 0.8 V8 L2.9 6.3 L4.2 9.2 L5.2 8.7 L3.9 5.9 L6.4 5.8 Z" fill="#fff" stroke="#777" stroke-width="0.7"/></svg>
<div class="ui" style="top:59px;left:842.60px;letter-spacing:-0.41px;">Выделить</div>
<svg style="position:absolute;left:879.6px;top:62.6px" width="6" height="4" viewBox="0 0 6 4"><path d="M1.1 1 L4.9 1 L3 2.9 Z" fill="#777"/></svg>
<svg style="position:absolute;left:905px;top:28px" width="22" height="20" viewBox="0 0 22 20"><path d="M18.9 8.2 A8.6 8.6 0 1 1 12.4 1.3" fill="none" stroke="#e0452c" stroke-width="1.5"/><path d="M6 9 L9.6 12.6 L18.2 3.4" fill="none" stroke="#1f5aa8" stroke-width="1.5"/></svg>
<div class="ui" style="top:51px;left:902.60px;font-size:9px;color:#333;letter-spacing:-0.588px;">Correct</div>
<svg style="position:absolute;left:941px;top:29px" width="20" height="19" viewBox="0 0 20 19"><path d="M5 16 Q4.6 7 11 3 Q14.6 1 17 2 Q17.6 6 14.6 9 L11.4 9.6 L13 10.6 Q10 13 6.4 12.6 Z" fill="#1f5aa8"/><path d="M4 6 l0.8 -1.8 l0.8 1.8 l1.8 0.8 l-1.8 0.8 l-0.8 1.8 l-0.8 -1.8 l-1.8 -0.8 Z" fill="#e0452c" transform="translate(-0.6,-2.4) scale(0.8)"/><path d="M4 6 l0.8 -1.8 l0.8 1.8 l1.8 0.8 l-1.8 0.8 l-0.8 1.8 l-0.8 -1.8 l-1.8 -0.8 Z" fill="#e0452c" transform="translate(12,9.8) scale(0.7)"/></svg>
<div class="ui" style="top:51px;left:932.40px;font-size:9px;color:#333;letter-spacing:-0.759px;">Rephraser</div>
<div style="position:absolute;left:0px;top:596px;width:1000px;height:16px;background:#f3f3f3;"></div>
<div style="position:absolute;left:0px;top:611px;width:1000px;height:1px;background:#efefdc;"></div>
<div style="position:absolute;left:0px;top:612px;width:1000px;height:2px;background:linear-gradient(90deg,#cfe58f 0,#e2e9a4 80px,#ecebb6 220px);"></div>
<div class="ui" style="top:600px;left:5.00px;font-size:7.8px;color:#444;letter-spacing:-0.31px;">Страница 5 из 7</div>
<div class="ui" style="top:600px;left:71.20px;font-size:7.8px;color:#444;letter-spacing:-0.341px;">Слово 146 из 867</div>
<svg style="position:absolute;left:142px;top:599px" width="11" height="9" viewBox="0 0 11 9"><path d="M0.6 0.8 H5 V8 H0.6 Z M5 0.8 H9.4 V8 H5" fill="none" stroke="#777" stroke-width="0.7"/><path d="M6.6 3 L8.4 5.6 M8.4 3 L6.6 5.6" stroke="#555" stroke-width="0.7"/></svg>
<div class="ui" style="top:600px;left:163.80px;font-size:7.8px;color:#444;letter-spacing:-0.255px;">русский</div>
<svg style="position:absolute;left:203px;top:598.5px" width="12" height="11" viewBox="0 0 12 11"><circle cx="4.6" cy="4.6" r="3.4" fill="none" stroke="#555" stroke-width="0.8"/><path d="M4.6 2.4 V5 M3 3.6 H6.2 M3.6 7 L4.6 5 L5.6 7" stroke="#555" stroke-width="0.6" fill="none"/><path d="M7.4 7.2 L10.4 10 M10.4 7.2 L7.4 10" stroke="#444" stroke-width="0.8"/></svg>
<div class="ui" style="top:600px;left:215.50px;font-size:7.8px;color:#444;letter-spacing:-0.309px;">Специальные возможности: проверьте рекомендации</div>
<svg style="position:absolute;left:801px;top:599.5px" width="11" height="9" viewBox="0 0 11 9"><path d="M0.6 0.8 H5.2 V8 H0.6 Z M5.8 0.8 H10.4 V8 H5.8 Z" fill="none" stroke="#888" stroke-width="0.7"/><path d="M1.6 3 H4.2 M1.6 5 H4.2 M6.8 3 H9.4 M6.8 5 H9.4" stroke="#aaa" stroke-width="0.6"/></svg>
<div style="position:absolute;left:821px;top:597px;width:27px;height:15px;background:#c8c8c8;"></div>
<svg style="position:absolute;left:829px;top:599.5px" width="11" height="9" viewBox="0 0 11 9"><rect x="0.6" y="0.6" width="9.6" height="7.6" fill="#e6e6e6" stroke="#777" stroke-width="0.7"/><path d="M2 3 H8.8 M2 4.6 H8.8 M2 6.2 H8.8" stroke="#888" stroke-width="0.6"/></svg>
<svg style="position:absolute;left:857px;top:599.5px" width="12" height="10" viewBox="0 0 12 10"><rect x="0.6" y="0.6" width="8.6" height="7.2" fill="none" stroke="#888" stroke-width="0.7"/><path d="M1.8 2.6 H8 M1.8 4.2 H6" stroke="#aaa" stroke-width="0.6"/><circle cx="8.4" cy="6.8" r="2.3" fill="#f3f3f3" stroke="#555" stroke-width="0.7"/><path d="M6.8 5.2 L10 8.4" stroke="#555" stroke-width="0.6"/></svg>
<div style="position:absolute;left:879px;top:604px;width:6px;height:1px;background:#aaa;"></div>
<div style="position:absolute;left:888px;top:604px;width:69px;height:1px;background:#555;"></div>
<div style="position:absolute;left:912px;top:600px;width:3px;height:9px;background:#444;"></div>
<div style="position:absolute;left:922px;top:602px;width:1px;height:5px;background:#555;"></div>
<div style="position:absolute;left:961px;top:604px;width:5px;height:1px;background:#888;"></div>
<div style="position:absolute;left:963px;top:602px;width:1px;height:5px;background:#888;"></div>
<div class="ui" style="top:600px;left:974.50px;font-size:7.8px;color:#444;letter-spacing:-0.32px;">74 %</div>
<div style="position:absolute;left:988px;top:87px;width:12px;height:509px;background:#f0f0f0;"></div>
<div style="position:absolute;left:988px;top:87px;width:12px;height:12px;background:#fff;border:1px solid #dadada;box-sizing:border-box"></div>
<svg style="position:absolute;left:990.5px;top:90.5px" width="7" height="5" viewBox="0 0 7 5"><path d="M0.6 4 L3.5 0.8 L6.4 4 Z" fill="#222"/></svg>
<div style="position:absolute;left:988px;top:584px;width:12px;height:11px;background:#fff;border:1px solid #dadada;box-sizing:border-box"></div>
<svg style="position:absolute;left:990.5px;top:587.5px" width="7" height="5" viewBox="0 0 7 5"><path d="M0.6 0.8 L6.4 0.8 L3.5 4 Z" fill="#222"/></svg>
<div style="position:absolute;left:988px;top:356px;width:12px;height:104px;background:#fff;border:1px solid #c8c8c8;border-right:none;box-sizing:border-box"></div>
</div>
</body></html>
